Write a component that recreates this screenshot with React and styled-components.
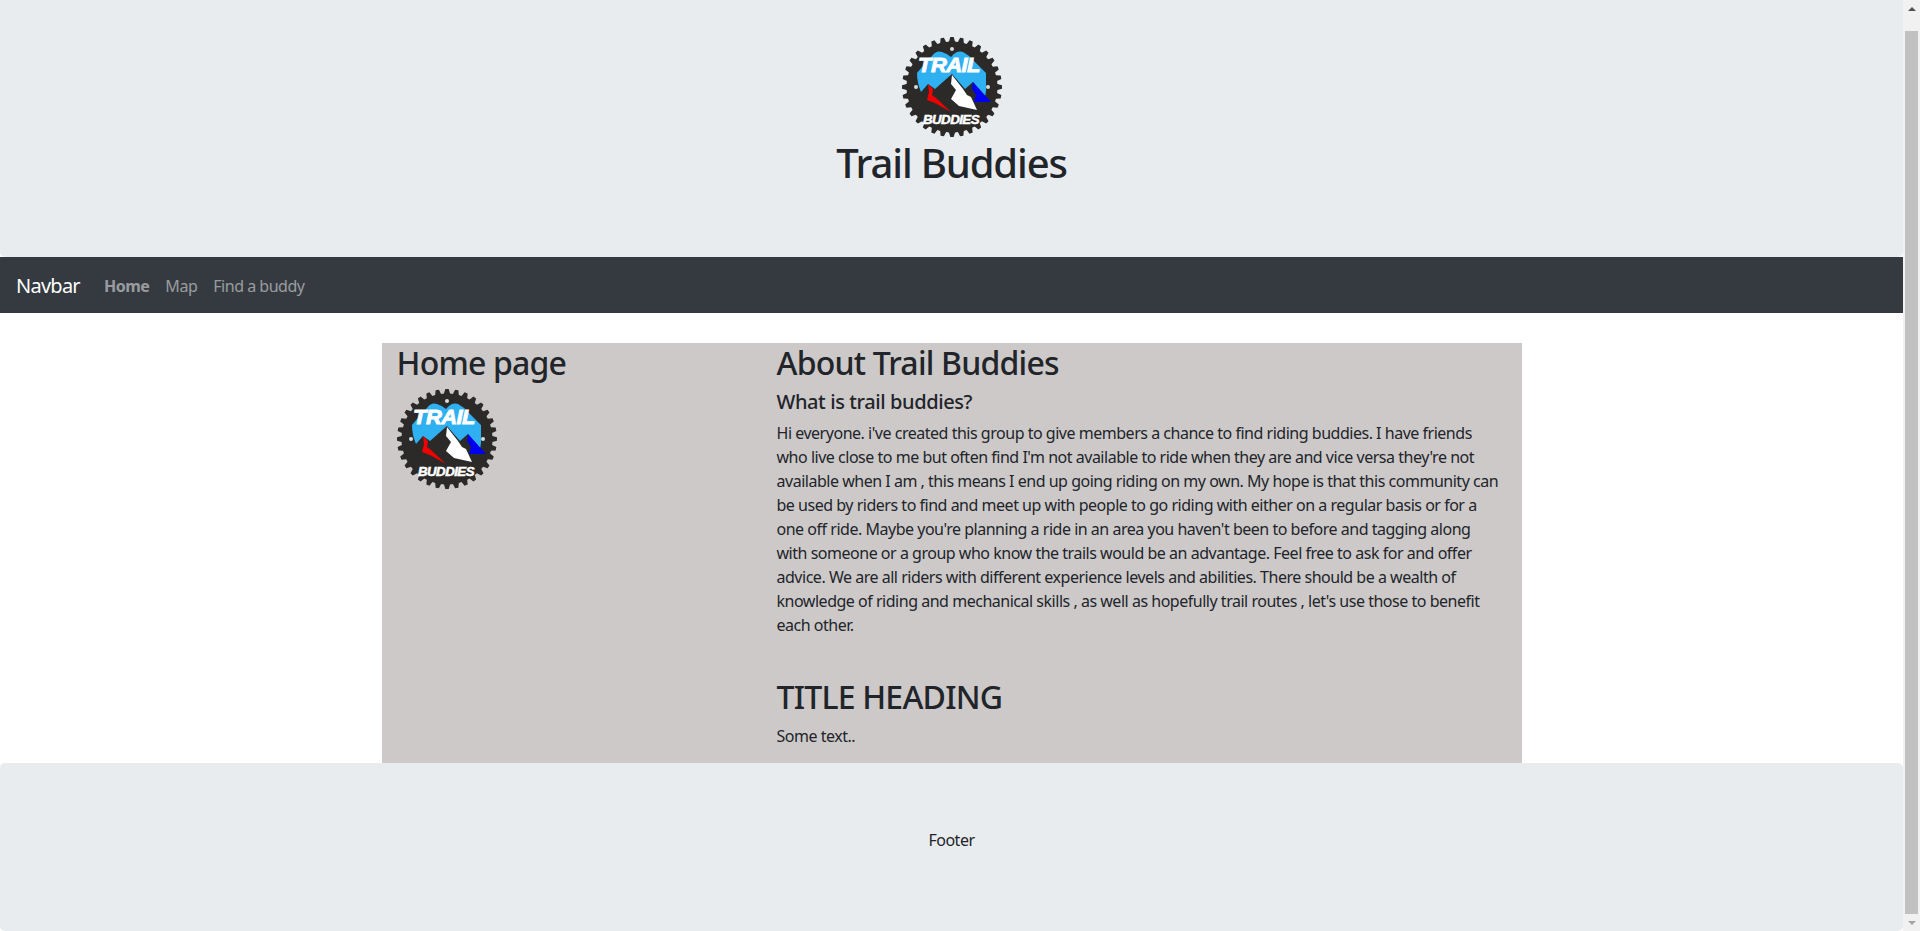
import React from "react";
import styled, { createGlobalStyle } from "styled-components";

const GlobalStyle = createGlobalStyle`
  html, body {
    margin: 0;
    height: 100%;
    overflow: hidden;
    background: #fff;
  }
  body {
    font-family: "Noto Sans", "Open Sans", sans-serif;
    font-size: 16px;
    line-height: 24px;
    color: #212529;
    letter-spacing: -0.48px;
  }
  * {
    box-sizing: border-box;
  }
`;

const Shell = styled.div`
  display: flex;
  height: 931px;
  overflow: hidden;
`;

const Page = styled.div`
  flex: 1;
  min-width: 0;
`;

const Hero = styled.header`
  height: 257px;
  padding-top: 37px;
  background: #e9ecef;
  border-radius: 0 0 4.8px 4.8px;
  display: flex;
  flex-direction: column;
  align-items: center;
`;

const HeroTitle = styled.h1`
  margin: 2px 0 0;
  font-size: 40px;
  line-height: 48px;
  font-weight: 500;
  letter-spacing: -1.15px;
`;

const Navbar = styled.nav`
  height: 56px;
  padding: 2px 16px 0;
  background: #343a40;
  display: flex;
  align-items: center;
`;

const Brand = styled.a`
  margin-right: 24px;
  font-size: 20px;
  line-height: 30px;
  color: #fff;
  letter-spacing: -0.75px;
`;

const NavLink = styled.a`
  margin-right: 16px;
  color: rgba(255, 255, 255, 0.5);
  font-weight: ${(p) => (p.$active ? 700 : 400)};
`;

const Container = styled.main`
  width: 1140px;
  margin: 30px auto 0;
  background: #cdc9c9;
  display: grid;
  grid-template-columns: 380px 760px;
`;

const Column = styled.section`
  padding: 0 15px;
`;

const Heading = styled.h2`
  margin: 0 0 7px;
  padding-top: 1px;
  font-size: 32px;
  line-height: 38px;
  font-weight: 500;
  letter-spacing: -0.8px;
`;

const SubHeading = styled.h5`
  margin: 0 0 7px;
  padding-top: 1px;
  font-size: 20px;
  line-height: 24px;
  font-weight: 500;
  letter-spacing: -0.4px;
`;

const Text = styled.p`
  margin: 0 0 40px;
  max-width: 727px;
`;

const ClosingText = styled.p`
  margin: 0 0 15px;
  padding-top: 1px;
`;

const Footer = styled.footer`
  height: 168px;
  padding-top: 65px;
  background: #e9ecef;
  border-radius: 4.8px;
  text-align: center;
`;

const Rail = styled.aside`
  width: 17px;
  flex: none;
  background: #f1f1f1;
  display: flex;
  flex-direction: column;
`;

const RailButton = styled.div`
  height: 17px;
  display: flex;
  align-items: center;
  justify-content: center;
  &::before {
    content: "";
    border-left: 4px solid transparent;
    border-right: 4px solid transparent;
    ${(p) =>
      p.$down
        ? "border-top: 4px solid #a3a3a3;"
        : "border-bottom: 4px solid #505050;"}
  }
`;

const RailTrack = styled.div`
  flex: 1;
  padding: 14px 2px 0;
  display: flex;
`;

const RailThumb = styled.div`
  flex: 1;
  background: #c1c1c1;
`;

// gear outline of the logo, worked out from the tooth count
const gearPath = (() => {
  const teeth = 32;
  const pts = [];
  for (let i = 0; i < teeth; i++) {
    const a = (i / teeth) * Math.PI * 2;
    const step = (Math.PI * 2) / teeth;
    [
      [45.5, -0.34],
      [50, -0.17],
      [50, 0.17],
      [45.5, 0.34],
    ].forEach(([r, k]) => {
      const x = 50 + r * Math.sin(a + k * step);
      const y = 50 - r * Math.cos(a + k * step);
      pts.push(`${x.toFixed(2)} ${y.toFixed(2)}`);
    });
  }
  return `M${pts.join("L")}Z`;
})();

const LogoSvg = styled.svg`
  display: block;
  width: 100px;
  height: 100px;
  flex: none;
`;

const Logo = () => (
  <LogoSvg viewBox="0 0 100 100">
    <path d={gearPath} fill="#2b2a29" />
    <circle cx="50" cy="12" r="2" fill="#d9dcde" />
    <circle cx="14" cy="50" r="2" fill="#d9dcde" />
    <circle cx="86" cy="50" r="2" fill="#d9dcde" />
    <path
      d="M15 36 Q25 24 30 19 Q34 13 40 15 Q46 17 49 20 Q55 13 61 15 Q67 18 72 24 L84 36 L84 54 L83 60 L71 45 L63 52 L50 37 L42 44 L33 52 L26 47 L19 55 Q15 46 15 36Z"
      fill="#2fb0f0"
    />
    <text
      x="16"
      y="35"
      fontFamily="Liberation Sans, sans-serif"
      fontSize="21"
      fontWeight="700"
      fontStyle="italic"
      fill="#fff"
      stroke="#fff"
      strokeWidth="0.9"
      textLength="62"
      lengthAdjust="spacingAndGlyphs"
    >
      TRAIL
    </text>
    <path
      d="M26 47 L31 52 L30 58 L34 61 L49 75 L33 66 L25 63 L27 55Z"
      fill="#f00000"
    />
    <path
      d="M50 38 L61 52 L65 58 L69 60 L75 73 L57 69 L49 62 L54 53 L49 47Z"
      fill="#fff"
    />
    <path d="M71 45 L80 55 L89 65 L72 65 L74 58 L70 52Z" fill="#0000f0" />
    <text
      x="21"
      y="87"
      fontFamily="Liberation Sans, sans-serif"
      fontSize="12"
      fontWeight="700"
      fontStyle="italic"
      fill="#fff"
      stroke="#fff"
      strokeWidth="0.5"
      textLength="56"
      lengthAdjust="spacingAndGlyphs"
    >
      BUDDIES
    </text>
  </LogoSvg>
);

const App = () => (
  <Shell>
    <GlobalStyle />
    <Page>
      <Hero>
        <Logo />
        <HeroTitle>Trail Buddies</HeroTitle>
      </Hero>
      <Navbar>
        <Brand>Navbar</Brand>
        <NavLink $active>Home</NavLink>
        <NavLink>Map</NavLink>
        <NavLink>Find a buddy</NavLink>
      </Navbar>
      <Container>
        <Column>
          <Heading>Home page</Heading>
          <Logo />
        </Column>
        <Column>
          <Heading>About Trail Buddies</Heading>
          <SubHeading>What is trail buddies?</SubHeading>
          <Text>
            Hi everyone. i've created this group to give members a chance to find
            riding buddies. I have friends who live close to me but often find I'm
            not available to ride when they are and vice versa they're not available
            when I am , this means I end up going riding on my own. My hope is that
            this community can be used by riders to find and meet up with people to
            go riding with either on a regular basis or for a one off ride. Maybe
            you're planning a ride in an area you haven't been to before and tagging
            along with someone or a group who know the trails would be an advantage.
            Feel free to ask for and offer advice. We are all riders with different
            experience levels and abilities. There should be a wealth of knowledge of
            riding and mechanical skills , as well as hopefully trail routes , let's
            use those to benefit each other.
          </Text>
          <Heading>TITLE HEADING</Heading>
          <ClosingText>Some text..</ClosingText>
        </Column>
      </Container>
      <Footer>Footer</Footer>
    </Page>
    <Rail>
      <RailButton />
      <RailTrack>
        <RailThumb />
      </RailTrack>
      <RailButton $down />
    </Rail>
  </Shell>
);

export default App;
